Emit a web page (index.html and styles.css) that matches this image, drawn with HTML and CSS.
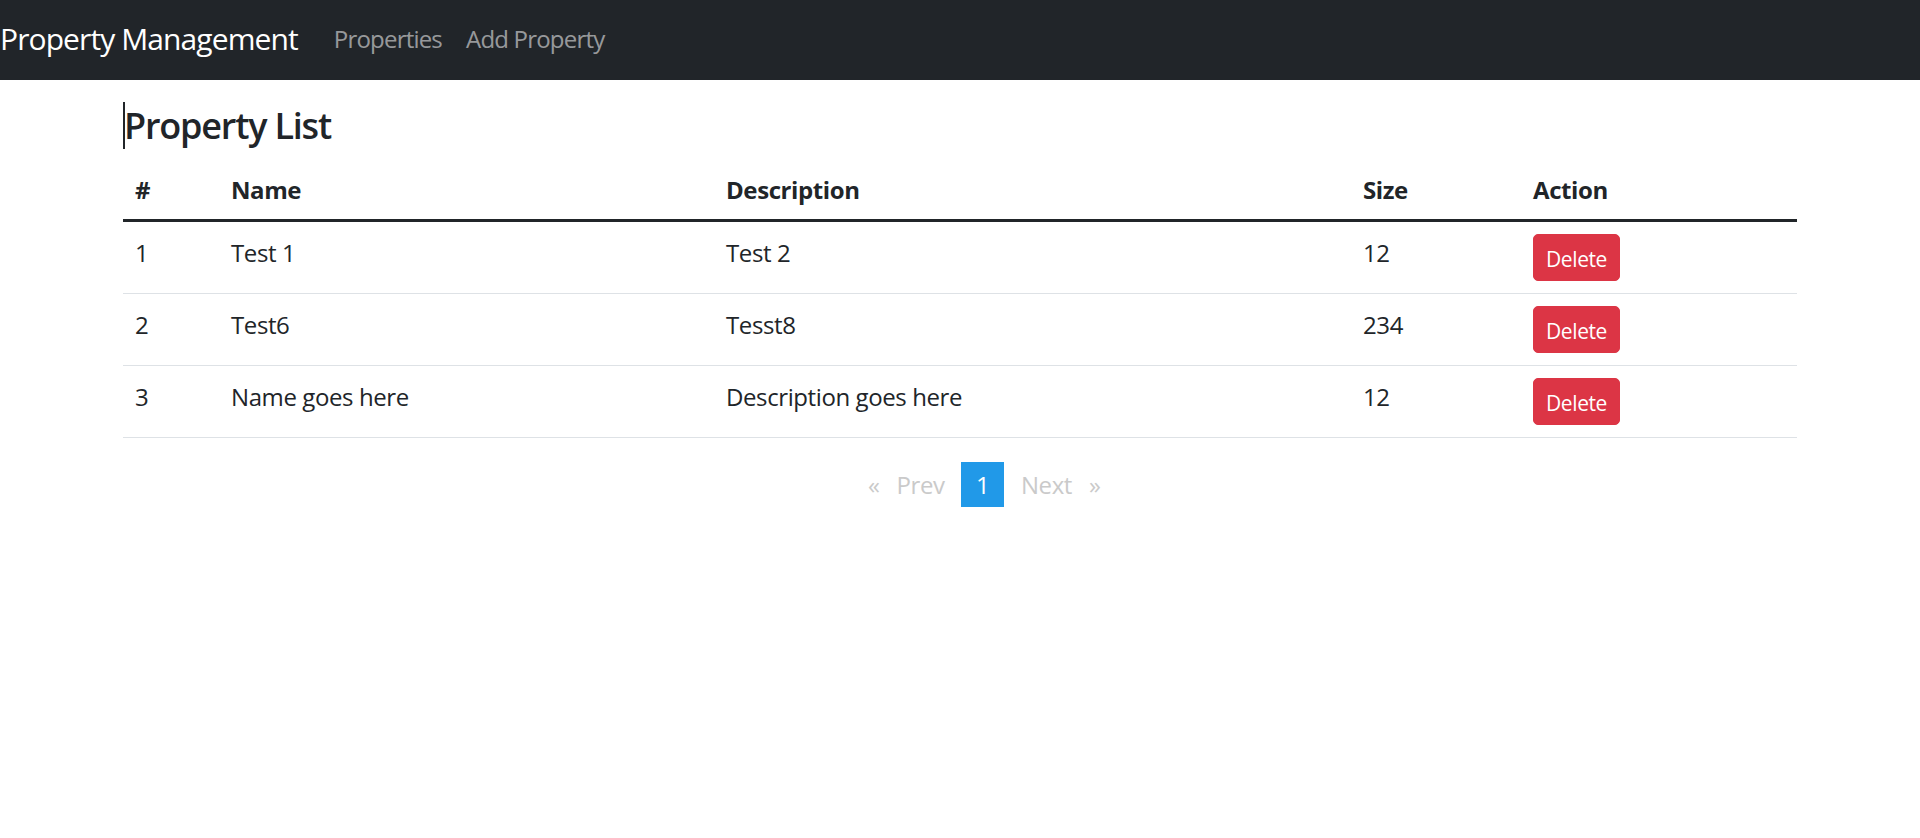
FILE: index.html
```html
<!DOCTYPE html>
<html lang="en">
<head>
<meta charset="utf-8">
<title>Property Management</title>
<link rel="stylesheet" href="styles.css">
</head>
<body>
<nav class="navbar">
  <a class="brand" href="#">Property Management</a>
  <ul class="nav">
    <li><a class="nav-link" href="#">Properties</a></li>
    <li><a class="nav-link" href="#">Add Property</a></li>
  </ul>
</nav>
<main class="container">
  <h4 class="title"><span class="caret"></span>Property List</h4>
  <table class="table">
    <colgroup>
      <col class="c-num"><col class="c-name"><col class="c-desc"><col class="c-size"><col class="c-action">
    </colgroup>
    <thead>
      <tr><th>#</th><th>Name</th><th>Description</th><th>Size</th><th>Action</th></tr>
    </thead>
    <tbody>
      <tr><td>1</td><td>Test 1</td><td>Test 2</td><td>12</td><td><button class="btn-delete">Delete</button></td></tr>
      <tr><td>2</td><td>Test6</td><td>Tesst8</td><td>234</td><td><button class="btn-delete">Delete</button></td></tr>
      <tr><td>3</td><td>Name goes here</td><td>Description goes here</td><td>12</td><td><button class="btn-delete">Delete</button></td></tr>
    </tbody>
  </table>
  <ul class="pagination">
    <li class="disabled prev">Prev</li>
    <li class="current">1</li>
    <li class="disabled next">Next</li>
  </ul>
</main>
</body>
</html>
```
FILE: styles.css
```css
* { box-sizing: border-box; }
html, body { margin: 0; padding: 0; }
body {
  font-family: "Open Sans", "Noto Sans", sans-serif;
  font-size: 24px;
  line-height: 1.5;
  color: #212529;
  background: #fff;
}
.navbar {
  display: flex;
  align-items: center;
  height: 80px;
  background: #212529;
}
.brand {
  font-size: 30px;
  line-height: 45px;
  color: #fff;
  text-decoration: none;
  margin-right: 24px;
  letter-spacing: -0.9px;
  margin-top: -4px;
}
.nav {
  display: flex;
  list-style: none;
  margin: 0;
  padding: 0;
  margin-top: -2px;
}
.nav-link {
  display: block;
  padding: 0 12px;
  color: rgba(255, 255, 255, 0.55);
  text-decoration: none;
  letter-spacing: -0.8px;
}
.container {
  width: 1674px;
  margin: 0 auto;
}
.title {
  position: relative;
  margin: 24px 0 12px;
  font-size: 36px;
  line-height: 1.2;
  font-weight: 600;
  letter-spacing: -1.2px;
  padding-left: 1px;
}
.caret {
  position: absolute;
  left: 0;
  top: -2px;
  width: 2px;
  height: 47px;
  background: #212529;
}
.table {
  width: 100%;
  border-collapse: collapse;
  table-layout: fixed;
  margin-bottom: 24px;
}
.c-num { width: 96px; }
.c-name { width: 495px; }
.c-desc { width: 637px; }
.c-size { width: 170px; }
.c-action { width: 276px; }
.table th, .table td {
  padding: 13px 12px 11px;
  text-align: left;
  vertical-align: top;
  border-bottom: 1px solid #dee2e6;
  letter-spacing: -0.4px;
}
.table td:last-child { padding-top: 12px; padding-bottom: 12px; }
.table th {
  font-weight: 700;
  border-bottom: 3px solid #212529;
}
.btn-delete {
  display: inline-block;
  height: 47px;
  padding: 3px 12px 0;
  font-family: inherit;
  font-size: 21px;
  line-height: 1;
  color: #fff;
  background: #dc3545;
  border: 1px solid #dc3545;
  border-radius: 5px;
  letter-spacing: -0.4px;
}
.pagination {
  display: flex;
  justify-content: center;
  list-style: none;
  margin: 0;
  padding: 0 0 0 50px;
}
.pagination li {
  padding: 4.5px 15px;
  margin-right: 1.5px;
  line-height: 36px;
  letter-spacing: -0.4px;
}
.pagination .disabled { color: #cacaca; }
.pagination .current { background: #2199e8; color: #fefefe; }
.pagination .prev::before { content: "\00AB"; display: inline-block; margin-right: 17px; }
.pagination .next::after { content: "\00BB"; display: inline-block; margin-left: 17px; }
```
